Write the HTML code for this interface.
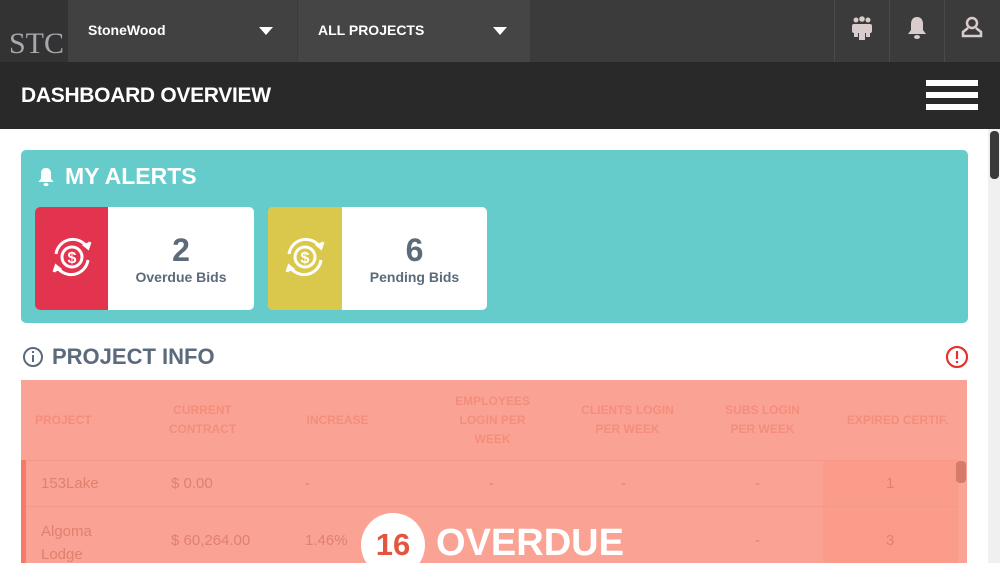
<!DOCTYPE html>
<html><head><meta charset="utf-8"><style>
*{margin:0;padding:0;box-sizing:border-box}
body{width:1000px;height:563px;overflow:hidden;background:#fff;font-family:"Liberation Sans",sans-serif;position:relative}
.abs{position:absolute}
.top{left:0;top:0;width:1000px;height:62px;background:#3b3b3b}
.dd{top:0;height:62px;color:#fff;font-weight:bold;font-size:14px;line-height:60px;padding-left:20px}
.tri{position:absolute;top:27px;width:0;height:0;border-left:7px solid transparent;border-right:7px solid transparent;border-top:8px solid #fff}
.title{left:0;top:62px;width:1000px;height:67px;background:#292929;color:#fff;font-weight:bold;font-size:21px;line-height:67px;padding-left:21px;letter-spacing:-0.3px}
.th{color:#f48d7c;font-size:12px;font-weight:bold;text-align:center;line-height:19px}
.td{color:#e0806f;font-size:15px}
</style></head><body>
<div class="abs top"></div>
<div class="abs" style="left:0;top:0;width:68px;height:62px;background:#333"></div>
<div class="abs" style="left:9px;top:27px;font-family:'Liberation Serif',serif;font-size:30px;color:#a8a8b0">STC</div>
<div class="abs dd" style="left:68px;width:229px;background:#414141">StoneWood<div class="tri" style="left:191px"></div></div>
<div class="abs dd" style="left:298px;width:232px;background:#454545">ALL PROJECTS<div class="tri" style="left:195px"></div></div>
<div class="abs" style="left:834px;top:0;width:1px;height:62px;background:#4a4a4a"></div>
<div class="abs" style="left:889px;top:0;width:1px;height:62px;background:#4a4a4a"></div>
<div class="abs" style="left:944px;top:0;width:1px;height:62px;background:#4a4a4a"></div>
<svg class="abs" style="left:850px;top:16px" width="24" height="26" viewBox="0 0 24 26" fill="#d8cccc"><circle cx="6" cy="4" r="2.5"/><circle cx="12" cy="3" r="2.8"/><circle cx="18" cy="4" r="2.5"/><rect x="2" y="8" width="20" height="9" rx="2"/><rect x="9" y="15" width="6" height="9"/><rect x="4" y="15" width="4" height="6"/><rect x="16" y="15" width="4" height="6"/></svg>
<svg class="abs" style="left:905px;top:15px" width="24" height="26" viewBox="0 0 24 26" fill="#d8cccc"><path d="M12 2c-4 0-6 3-6 7v6l-3 4h18l-3-4V9c0-4-2-7-6-7z"/><ellipse cx="12" cy="22" rx="3" ry="2"/></svg>
<svg class="abs" style="left:959px;top:15px" width="26" height="26" viewBox="0 0 26 26" fill="none" stroke="#d8cccc" stroke-width="2.5"><circle cx="13" cy="8" r="5"/><path d="M9 13l-5 4v4h18v-4l-5-4"/></svg>
<div class="abs title">DASHBOARD OVERVIEW</div>
<div class="abs" style="left:926px;top:80px;width:52px;height:6px;background:#fff"></div>
<div class="abs" style="left:926px;top:92px;width:52px;height:6px;background:#fff"></div>
<div class="abs" style="left:926px;top:104px;width:52px;height:6px;background:#fff"></div>
<div class="abs" style="left:988px;top:129px;width:12px;height:434px;background:#f0f0f0"></div>
<div class="abs" style="left:990px;top:131px;width:9px;height:48px;background:#3a3a3a;border-radius:4px"></div>

<div class="abs" style="left:21px;top:150px;width:947px;height:173px;background:#66cccb;border-radius:5px"></div>
<svg class="abs" style="left:36px;top:166px" width="20" height="22" viewBox="0 0 24 26" fill="#fff"><path d="M12 2c-4 0-6 3-6 7v6l-3 4h18l-3-4V9c0-4-2-7-6-7z"/><ellipse cx="12" cy="22" rx="3" ry="2"/></svg>
<div class="abs" style="left:65px;top:163px;color:#fff;font-weight:bold;font-size:23px">MY ALERTS</div>

<div class="abs" style="left:35px;top:207px;width:219px;height:103px;background:#fff;border-radius:5px;overflow:hidden"><div style="width:73px;height:103px;background:#e3344f"></div></div>
<div class="abs" style="left:268px;top:207px;width:219px;height:103px;background:#fff;border-radius:5px;overflow:hidden"><div style="width:74px;height:103px;background:#d9c84b"></div></div>
<svg class="abs" style="left:47px;top:232px" width="50" height="50" viewBox="0 0 50 50" fill="none" stroke="#fff" stroke-width="3"><path d="M9 22a17 17 0 0 1 31-7"/><path d="M41 28a17 17 0 0 1-31 7"/><path d="M36 12l5 4l2-6" fill="#fff"/><path d="M14 38l-5-4l-2 6" fill="#fff"/><circle cx="25" cy="25" r="10"/><text x="25" y="31" font-size="16" font-weight="bold" text-anchor="middle" fill="#fff" stroke="none" font-family="Liberation Sans">$</text></svg>
<svg class="abs" style="left:280px;top:232px" width="50" height="50" viewBox="0 0 50 50" fill="none" stroke="#fff" stroke-width="3"><path d="M9 22a17 17 0 0 1 31-7"/><path d="M41 28a17 17 0 0 1-31 7"/><path d="M36 12l5 4l2-6" fill="#fff"/><path d="M14 38l-5-4l-2 6" fill="#fff"/><circle cx="25" cy="25" r="10"/><text x="25" y="31" font-size="16" font-weight="bold" text-anchor="middle" fill="#fff" stroke="none" font-family="Liberation Sans">$</text></svg>
<div class="abs" style="left:108px;top:232px;width:146px;text-align:center;color:#5b6b7b;font-weight:bold"><div style="font-size:32px;line-height:36px">2</div><div style="font-size:14px;margin-top:1px">Overdue Bids</div></div>
<div class="abs" style="left:342px;top:232px;width:145px;text-align:center;color:#5b6b7b;font-weight:bold"><div style="font-size:32px;line-height:36px">6</div><div style="font-size:14px;margin-top:1px">Pending Bids</div></div>

<svg class="abs" style="left:22px;top:346px" width="22" height="22" viewBox="0 0 22 22" fill="none" stroke="#5b6b7b" stroke-width="2"><circle cx="11" cy="11" r="9"/><path d="M11 9v7M11 5v2"/></svg>
<div class="abs" style="left:52px;top:344px;color:#5b6b7b;font-weight:bold;font-size:22px">PROJECT INFO</div>
<svg class="abs" style="left:945px;top:345px" width="24" height="24" viewBox="0 0 24 24" fill="none" stroke="#e8312d" stroke-width="2.2"><circle cx="12" cy="12" r="10"/><path d="M12 6v8M12 16v2"/></svg>

<div class="abs" style="left:21px;top:380px;width:946px;height:183px;background:#faa394"></div>
<div class="abs" style="left:823px;top:460px;width:135px;height:103px;background:#fb9b89"></div>
<div class="abs" style="left:21px;top:460px;width:5px;height:103px;background:#f47c66"></div>
<div class="abs" style="left:26px;top:460px;width:932px;height:1px;background:#f59888"></div>
<div class="abs" style="left:26px;top:506px;width:932px;height:1px;background:#f59888"></div>
<div class="abs" style="left:956px;top:461px;width:10px;height:22px;background:#d67a6a;border-radius:4px"></div>
<div class="abs th" style="left:30px;top:411px;width:70px;text-align:left;padding-left:5px">PROJECT</div>
<div class="abs th" style="left:165px;top:401px;width:75px">CURRENT<br>CONTRACT</div>
<div class="abs th" style="left:300px;top:411px;width:75px">INCREASE</div>
<div class="abs th" style="left:440px;top:392px;width:105px">EMPLOYEES<br>LOGIN PER<br>WEEK</div>
<div class="abs th" style="left:570px;top:401px;width:115px">CLIENTS LOGIN<br>PER WEEK</div>
<div class="abs th" style="left:710px;top:401px;width:105px">SUBS LOGIN<br>PER WEEK</div>
<div class="abs th" style="left:835px;top:411px;width:125px">EXPIRED CERTIF.</div>
<div class="abs td" style="left:41px;top:475px">153Lake</div>
<div class="abs td" style="left:171px;top:475px">$ 0.00</div>
<div class="abs td" style="left:305px;top:475px">-</div>
<div class="abs td" style="left:489px;top:475px">-</div>
<div class="abs td" style="left:621px;top:475px">-</div>
<div class="abs td" style="left:755px;top:475px">-</div>
<div class="abs td" style="left:886px;top:475px">1</div>
<div class="abs td" style="left:41px;top:520px;line-height:23px">Algoma<br>Lodge</div>
<div class="abs td" style="left:171px;top:532px">$ 60,264.00</div>
<div class="abs td" style="left:305px;top:532px">1.46%</div>
<div class="abs td" style="left:755px;top:532px">-</div>
<div class="abs td" style="left:886px;top:532px">3</div>
<div class="abs" style="left:361px;top:513px;width:64px;height:64px;border-radius:50%;background:#fff"></div>
<div class="abs" style="left:361px;top:527px;width:64px;text-align:center;color:#e4553f;font-weight:bold;font-size:31px">16</div>
<div class="abs" style="left:436px;top:522px;color:#fff;font-weight:bold;font-size:38px">OVERDUE</div>
</body></html>
